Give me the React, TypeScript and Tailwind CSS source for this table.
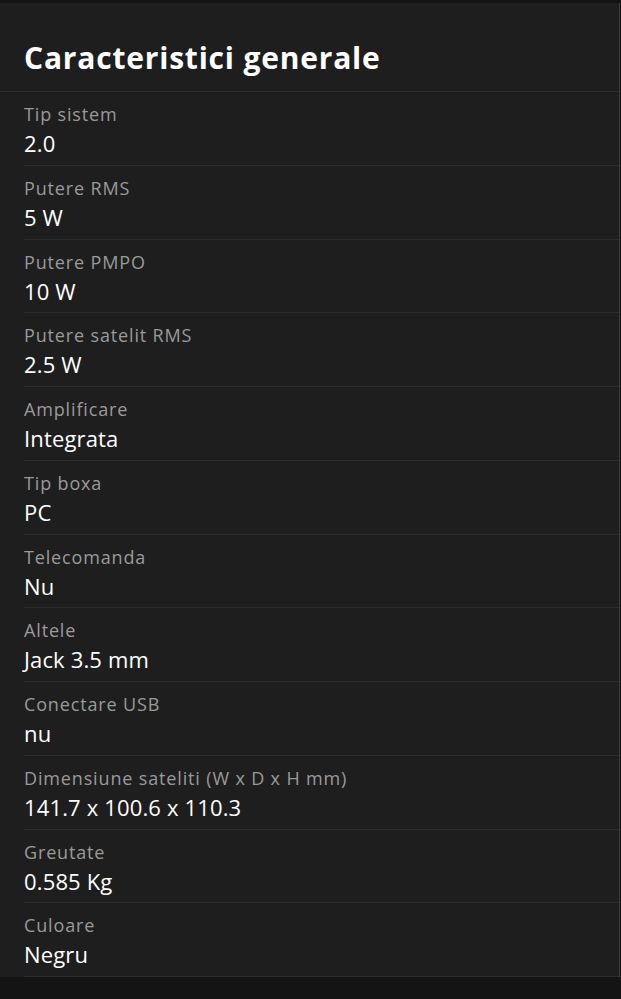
import React from "react";

interface Spec {
  label: string;
  value: string;
}

const specs: Spec[] = [
  { label: "Tip sistem", value: "2.0" },
  { label: "Putere RMS", value: "5 W" },
  { label: "Putere PMPO", value: "10 W" },
  { label: "Putere satelit RMS", value: "2.5 W" },
  { label: "Amplificare", value: "Integrata" },
  { label: "Tip boxa", value: "PC" },
  { label: "Telecomanda", value: "Nu" },
  { label: "Altele", value: "Jack 3.5 mm" },
  { label: "Conectare USB", value: "nu" },
  { label: "Dimensiune sateliti (W x D x H mm)", value: "141.7 x 100.6 x 110.3" },
  { label: "Greutate", value: "0.585 Kg" },
  { label: "Culoare", value: "Negru" },
];

const App: React.FC = () => {
  return (
    <div
      className="min-h-[999px] bg-[#141414] pt-[3px]"
      style={{ fontFamily: '"Open Sans", "Noto Sans", sans-serif' }}
    >
      <section className="w-[620px] border-r border-[#3a3a3a] bg-[#1e1e1e]">
        <h1 className="border-b border-[#2c2c2c] px-6 pb-[15px] pt-[37px] text-[30px] font-bold leading-[36px] tracking-[0.8px] text-white">
          Caracteristici generale
        </h1>
        <ul className="pl-6">
          {specs.map((spec) => (
            <li
              key={spec.label}
              className="border-b border-[#2c2c2c] pb-[6.75px] pt-[10px]"
            >
              <div className="text-[18px] leading-[24px] tracking-[0.85px] text-[#9a9a9a]">
                {spec.label}
              </div>
              <div className="mt-[2px] text-[22px] leading-[30px] tracking-[0.15px] text-white">
                {spec.value}
              </div>
            </li>
          ))}
        </ul>
      </section>
    </div>
  );
};

export default App;
